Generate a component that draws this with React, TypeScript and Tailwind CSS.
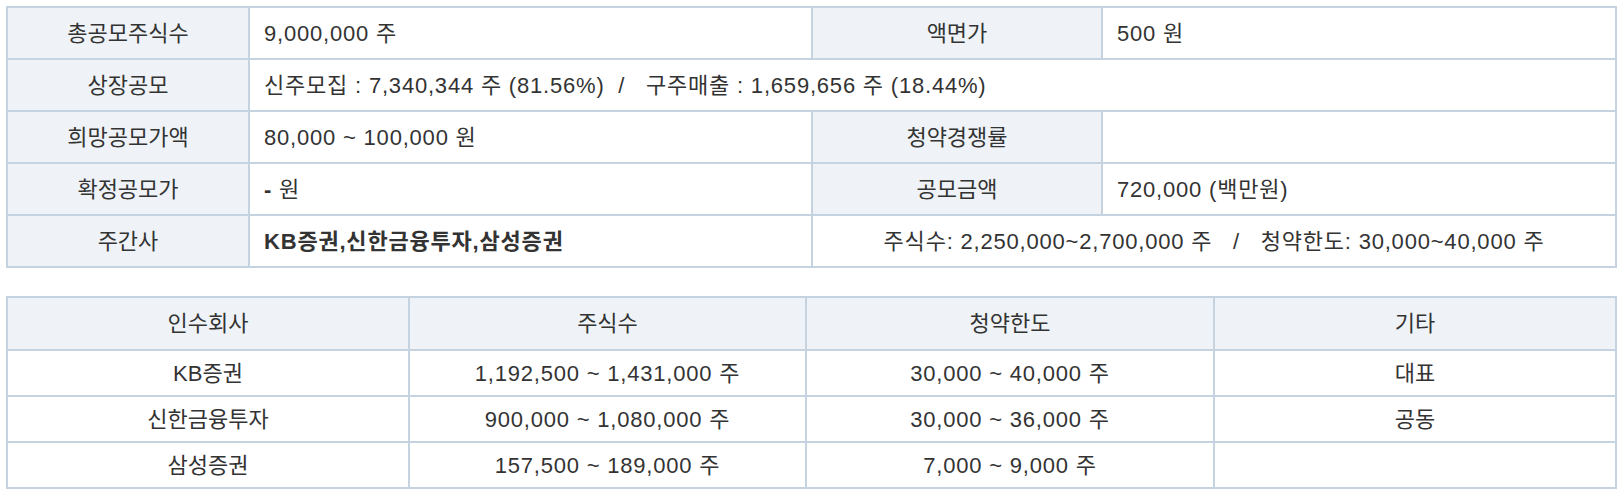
const H = 'flex items-center justify-center bg-[#eff3f7] h-[50px]';
const V = 'flex items-center bg-white h-[50px] pl-[14px] tracking-[0.8px]';
const C = 'flex items-center justify-center bg-white';

const underwriters = [
  { name: 'KB증권', shares: '1,192,500 ~ 1,431,000 주', limit: '30,000 ~ 40,000 주', etc: '대표' },
  { name: '신한금융투자', shares: '900,000 ~ 1,080,000 주', limit: '30,000 ~ 36,000 주', etc: '공동' },
  { name: '삼성증권', shares: '157,500 ~ 189,000 주', limit: '7,000 ~ 9,000 주', etc: '' },
];

export default function App() {
  return (
    <div className="min-h-screen bg-white pt-[6px] pl-[6px] text-[22px] text-[#333] font-['Liberation_Sans','Noto_Sans_CJK_KR',sans-serif]">
      {/* 공모 개요 */}
      <div className="grid w-[1611px] grid-cols-[240px_561px_288px_512px] gap-[2px] bg-[#c5d3e1] p-[2px]">
        <div className={H}>총공모주식수</div>
        <div className={V}>9,000,000 주</div>
        <div className={H}>액면가</div>
        <div className={V}>500 원</div>

        <div className={H}>상장공모</div>
        <div className={`${V} col-span-3`}>
          신주모집 : 7,340,344 주 (81.56%)&nbsp;&nbsp;/&nbsp;&nbsp;&nbsp;구주매출 : 1,659,656 주 (18.44%)
        </div>

        <div className={H}>희망공모가액</div>
        <div className={V}>80,000 ~ 100,000 원</div>
        <div className={H}>청약경쟁률</div>
        <div className={V}></div>

        <div className={H}>확정공모가</div>
        <div className={V}>
          <b className="font-bold">-</b>&nbsp;원
        </div>
        <div className={H}>공모금액</div>
        <div className={V}>720,000 (백만원)</div>

        <div className={H}>주간사</div>
        <div className={`${V} font-bold`}>KB증권,신한금융투자,삼성증권</div>
        <div className={`${C} col-span-2 h-[50px] tracking-[0.8px]`}>
          주식수: 2,250,000~2,700,000 주&nbsp;&nbsp;&nbsp;/&nbsp;&nbsp;&nbsp;청약한도: 30,000~40,000 주
        </div>
      </div>

      {/* 인수회사 */}
      <div className="mt-[28px] grid w-[1611px] grid-cols-[400px_395px_406px_400px] gap-[2px] bg-[#c5d3e1] p-[2px]">
        <div className="flex h-[51px] items-center justify-center bg-[#eff3f7]">인수회사</div>
        <div className="flex h-[51px] items-center justify-center bg-[#eff3f7]">주식수</div>
        <div className="flex h-[51px] items-center justify-center bg-[#eff3f7]">청약한도</div>
        <div className="flex h-[51px] items-center justify-center bg-[#eff3f7]">기타</div>
        {underwriters.map((u) => (
          <div key={u.name} className="contents">
            <div className={`${C} h-[44px]`}>{u.name}</div>
            <div className={`${C} h-[44px] tracking-[0.8px]`}>{u.shares}</div>
            <div className={`${C} h-[44px] tracking-[0.8px]`}>{u.limit}</div>
            <div className={`${C} h-[44px]`}>{u.etc}</div>
          </div>
        ))}
      </div>
    </div>
  );
}
